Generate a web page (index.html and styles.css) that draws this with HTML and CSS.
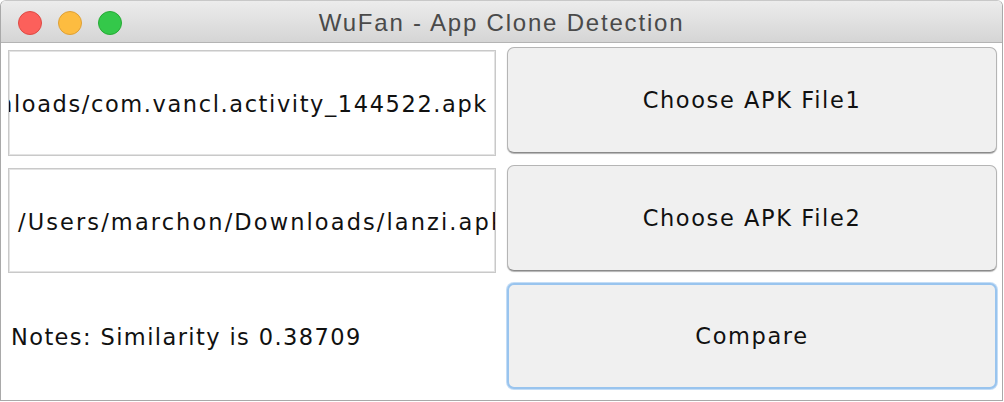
FILE: index.html
```html
<!DOCTYPE html>
<html>
<head>
<meta charset="utf-8">
<link rel="stylesheet" href="styles.css">
</head>
<body>
<div class="window">
  <div class="titlebar">
    <div class="lights">
      <span class="light red"></span>
      <span class="light yellow"></span>
      <span class="light green"></span>
    </div>
    <div class="title">WuFan - App Clone Detection</div>
  </div>
  <div class="content">
    <div class="field field-end"><span class="field-text">/Users/marchon/Downloads/com.vancl.activity_144522.apk</span></div>
    <button class="btn">Choose APK File1</button>
    <div class="field field-start"><span class="field-text">/Users/marchon/Downloads/lanzi.apk</span></div>
    <button class="btn">Choose APK File2</button>
    <div class="notes">Notes: Similarity is 0.38709</div>
    <button class="btn btn-focus">Compare</button>
  </div>
</div>
</body>
</html>
```
FILE: styles.css
```css
html, body {
  margin: 0;
  padding: 0;
  background: #ffffff;
}
body {
  width: 1004px;
  height: 402px;
  overflow: hidden;
  font-family: "DejaVu Sans", "Liberation Sans", sans-serif;
}
.window {
  box-sizing: border-box;
  width: 1003px;
  height: 401px;
  border: 1px solid #a9a9a9;
  border-top-color: #c8c8c8;
  border-radius: 6px 6px 0 0;
  background: #ffffff;
  display: flex;
  flex-direction: column;
  overflow: hidden;
}
.titlebar {
  position: relative;
  height: 41px;
  flex: 0 0 41px;
  background: linear-gradient(#ececec, #d5d5d5);
  border-bottom: 1px solid #b4b4b4;
  display: flex;
  align-items: center;
}
.lights {
  display: flex;
  gap: 16px;
  padding-left: 17px;
  padding-top: 2px;
}
.light {
  width: 24px;
  height: 24px;
  border-radius: 50%;
  box-sizing: border-box;
}
.red { background: #fc605b; border: 1px solid #de4a44; }
.yellow { background: #fdbc40; border: 1px solid #dea036; }
.green { background: #34c84a; border: 1px solid #27aa35; }
.title {
  position: absolute;
  left: 0;
  right: 0;
  top: 0;
  bottom: 0;
  display: flex;
  align-items: center;
  justify-content: center;
  font-family: "Liberation Sans", "Helvetica", sans-serif;
  font-size: 24px;
  letter-spacing: 1.8px;
  color: #4a4a4a;
  padding-top: 2px;
  pointer-events: none;
}
.content {
  flex: 1;
  display: grid;
  grid-template-columns: 488px 490px;
  grid-template-rows: 118px 118px 1fr;
  column-gap: 11px;
  padding: 4px 4px 0 7px;
}
.field {
  box-sizing: border-box;
  margin-top: 3px;
  height: 106px;
  border: 1px solid #c9c9c9;
  box-shadow: inset 0 0 0 1px #e3e3e3;
  background: #ffffff;
  display: flex;
  align-items: center;
  overflow: hidden;
  padding: 0 8px 0 9px;
  font-size: 22.5px;
  letter-spacing: 2.1px;
  color: #111111;
  white-space: nowrap;
}
.field-start { height: 105px; }
.field-end {
  justify-content: flex-end;
  letter-spacing: 1.6px;
  padding-right: 7px;
}
.field-text { flex: 0 0 auto; padding-top: 2px; }
.btn {
  box-sizing: border-box;
  height: 106px;
  width: 490px;
  border: 1px solid #b5b5b5;
  border-bottom-color: #8a8a8a;
  border-radius: 7px;
  background: #f0f0f0;
  box-shadow: 0 1px 1px rgba(0,0,0,0.3);
  font-family: "DejaVu Sans", "Liberation Sans", sans-serif;
  font-size: 22.5px;
  letter-spacing: 1.6px;
  color: #111111;
  padding: 0;
  margin: 0;
}
.btn-focus {
  border: 2px solid #99c4ee;
  box-shadow: 0 0 0 1px #c4ddf6;
}
.notes {
  display: flex;
  align-items: center;
  padding-left: 3px;
  padding-bottom: 10px;
  font-size: 22.5px;
  letter-spacing: 1.4px;
  color: #111111;
}
```
